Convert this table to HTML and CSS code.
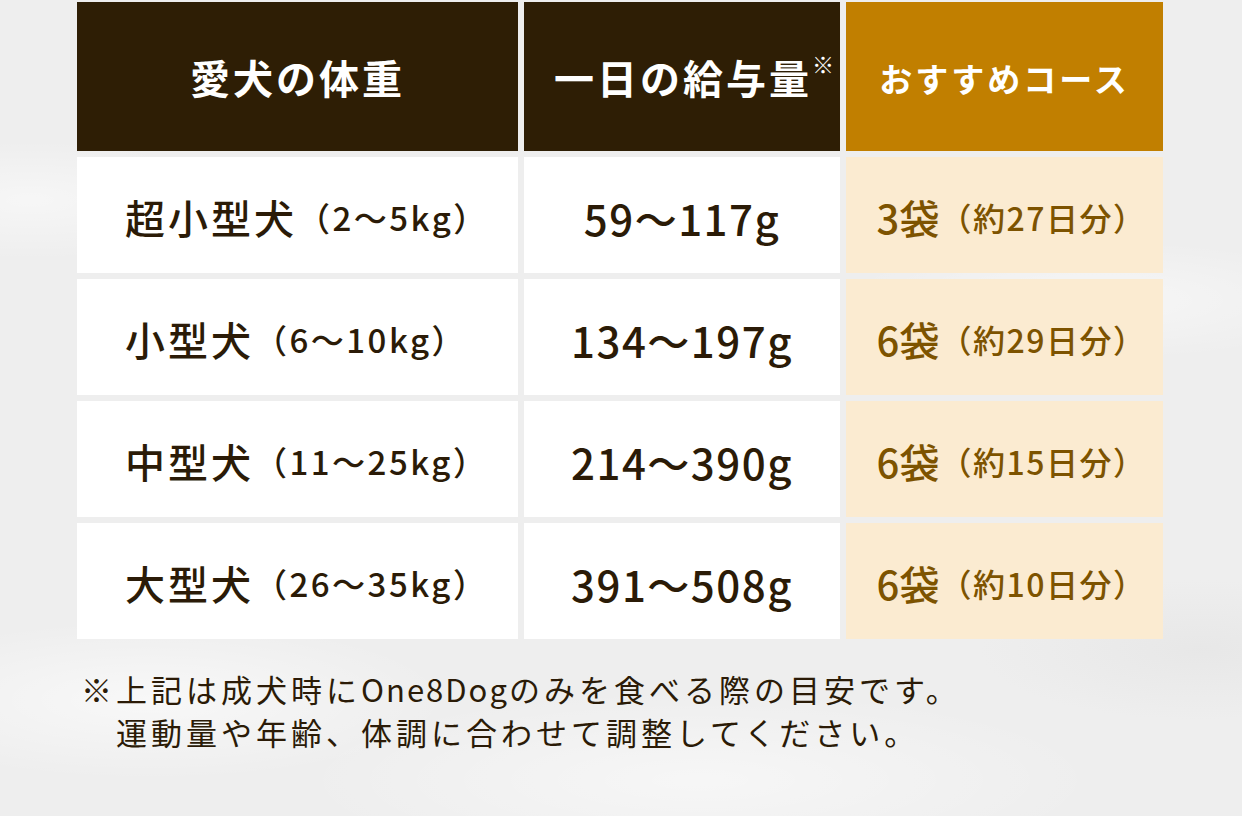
FILE: index.html
```html
<!DOCTYPE html>
<html lang="ja">
<head>
<meta charset="utf-8">
<title>給与量</title>
<link rel="stylesheet" href="styles.css">
</head>
<body>
<div class="page">
  <div class="table">
    <div class="cell head">愛犬の体重</div>
    <div class="cell head">一日の給与量<span class="mark">※</span></div>
    <div class="cell head gold">おすすめコース</div>

    <div class="cell weight">超小型犬<span class="sub">（2〜5kg）</span></div>
    <div class="cell amount">59〜117g</div>
    <div class="cell course">3袋<span class="sub">（約27日分）</span></div>

    <div class="cell weight">小型犬<span class="sub">（6〜10kg）</span></div>
    <div class="cell amount">134〜197g</div>
    <div class="cell course">6袋<span class="sub">（約29日分）</span></div>

    <div class="cell weight">中型犬<span class="sub">（11〜25kg）</span></div>
    <div class="cell amount">214〜390g</div>
    <div class="cell course">6袋<span class="sub">（約15日分）</span></div>

    <div class="cell weight">大型犬 <span class="sub">（26〜35kg）</span></div>
    <div class="cell amount">391〜508g</div>
    <div class="cell course">6袋<span class="sub">（約10日分）</span></div>
  </div>
  <p class="note">※上記は成犬時に<span class="latin">One8Dog</span>のみを食べる際の目安です。<br>運動量や年齢、体調に合わせて調整してください。</p>
</div>
</body>
</html>
```
FILE: styles.css
```css
html, body {
  margin: 0;
  padding: 0;
}
body {
  width: 1242px;
  height: 816px;
  overflow: hidden;
  font-family: "Noto Sans CJK JP", "Noto Sans", sans-serif;
  color: #2b1b07;
  background-color: #eeeeee;
  background-image:
    radial-gradient(ellipse 300px 80px at 150px 700px, rgba(255,255,255,0.6), transparent),
    radial-gradient(ellipse 260px 60px at 1100px 300px, rgba(255,255,255,0.5), transparent),
    radial-gradient(ellipse 400px 90px at 700px 780px, rgba(255,255,255,0.5), transparent),
    radial-gradient(ellipse 200px 60px at 30px 200px, rgba(255,255,255,0.5), transparent),
    radial-gradient(ellipse 220px 70px at 1200px 650px, rgba(225,225,225,0.5), transparent);
}
.page {
  padding: 2px 0 0 77px;
}
.table {
  display: grid;
  grid-template-columns: 441px 316px 317px;
  grid-template-rows: 149px repeat(4, 116px);
  gap: 6px;
}
.cell {
  display: flex;
  align-items: center;
  justify-content: center;
  background: #ffffff;
  white-space: nowrap;
}
.head {
  background: #2e1e05;
  color: #ffffff;
  font-weight: 700;
  font-size: 40px;
  letter-spacing: 3px;
  padding-top: 1px;
}
.head.gold {
  background: #c17f00;
  font-size: 33px;
  letter-spacing: 3px;
  padding-top: 3px;
}
.mark {
  font-size: 22px;
  font-weight: 400;
  align-self: flex-start;
  margin-top: 44px;
  margin-right: -24px;
  letter-spacing: 0;
}
.weight {
  justify-content: flex-start;
  padding-left: 48px;
  font-size: 40px;
  font-weight: 500;
  letter-spacing: 3px;
  padding-top: 4px;
}
.weight .sub {
  font-size: 33px;
  letter-spacing: 2.5px;
}
.amount {
  font-size: 42px;
  font-weight: 500;
  letter-spacing: 1.5px;
  padding-top: 4px;
}
.course {
  background: #fbebd1;
  color: #7d5300;
  font-size: 40px;
  font-weight: 500;
  padding-top: 4px;
  padding-left: 14px;
}
.course .sub {
  font-size: 32px;
  letter-spacing: 1.5px;
}
.note {
  margin: 28px 0 0 4px;
  font-size: 31px;
  line-height: 43px;
  letter-spacing: 4px;
  padding-left: 35px;
  text-indent: -35px;
}
.latin {
  letter-spacing: 2px;
}
```
